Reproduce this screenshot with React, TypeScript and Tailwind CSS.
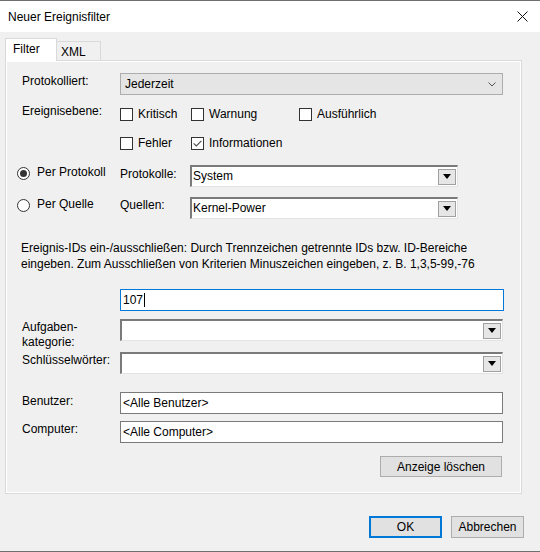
import type { ReactNode } from "react";

function Check({ checked = false, label }: { checked?: boolean; label: string }) {
  return (
    <span className="flex items-center gap-[5px]">
      <span className="w-[13px] h-[13px] border border-[#333333] bg-white flex items-center justify-center">
        {checked && (
          <svg width="9" height="7" viewBox="0 0 9 7">
            <path d="M0.6 3.4 L3.3 6 L8.4 0.8" stroke="#4d4d4d" strokeWidth="1.1" fill="none" />
          </svg>
        )}
      </span>
      <span>{label}</span>
    </span>
  );
}

function Radio({ on = false }: { on?: boolean }) {
  return (
    <span className="w-[13px] h-[13px] rounded-full border border-[#333333] bg-white flex items-center justify-center shrink-0">
      {on && <span className="w-[7px] h-[7px] rounded-full bg-[#333333]" />}
    </span>
  );
}

// old style sunken combo with the small square drop button
function OldCombo({ width, value = "" }: { width: string; value?: string }) {
  return (
    <div
      className={`${width} h-[22px] bg-white border-t-2 border-l-2 border-b border-r border-t-[#7a7a7a] border-l-[#7a7a7a] border-b-[#e3e3e3] border-r-[#e3e3e3] flex items-center justify-between pl-[1px] pr-[1px]`}
    >
      <span className="leading-[15px]">{value}</span>
      <span className="w-[18px] h-[16px] border border-[#a0a0a0] bg-[#e6e6e6] flex items-center justify-center">
        <svg width="8" height="5" viewBox="0 0 8 5">
          <polygon points="0,0 8,0 4,5" fill="#000" />
        </svg>
      </span>
    </div>
  );
}

function Label({ children, className = "" }: { children: ReactNode; className?: string }) {
  return <div className={`ml-[5px] w-[98px] shrink-0 leading-[15px] ${className}`}>{children}</div>;
}

export default function App() {
  return (
    <div className="w-[540px] h-[552px] bg-[#f0f0f0] border-t border-b border-[#6e6e6e] flex flex-col font-['Liberation_Sans',Arial,sans-serif] text-[12px] text-black overflow-hidden">
      {/* title bar */}
      <div className="h-[31px] bg-white flex items-center justify-between pl-[8px] pr-[9px] shrink-0">
        <span className="pt-[1px]">Neuer Ereignisfilter</span>
        <svg width="11" height="11" viewBox="0 0 11 11" className="mr-[3px]">
          <path d="M0.5 0.5 L10.5 10.5 M10.5 0.5 L0.5 10.5" stroke="#111" strokeWidth="1" />
        </svg>
      </div>

      <div className="pl-[5px] pt-[6px]">
        {/* tabs */}
        <div className="flex items-end h-[23px] relative z-10 -mb-px">
          <div className="w-[52px] h-[23px] bg-white border-t border-l border-r border-[#d9d9d9] pl-[7px] pt-[3px] leading-[15px]">
            Filter
          </div>
          <div className="w-[44px] h-[20px] bg-[#f0f0f0] border-t border-r border-b border-[#d9d9d9] pl-[4px] pt-[3px] leading-[15px]">
            XML
          </div>
        </div>

        {/* tab page */}
        <div className="w-[517px] h-[434px] border border-[#d9d9d9] bg-[#f0f0f0] shadow-[inset_0_0_0_1px_#ffffff] pl-[11px] pt-[12px] flex flex-col">
          <div className="flex items-start">
            <Label className="pt-[1px]">Protokolliert:</Label>
            <div className="w-[383px] h-[22px] bg-[#e5e5e5] border border-[#adadad] flex items-center justify-between pl-[4px] pr-[6px]">
              <span>Jederzeit</span>
              <svg width="8" height="5" viewBox="0 0 8 5">
                <path d="M0.5 0.5 L4 4 L7.5 0.5" stroke="#555" strokeWidth="1" fill="none" />
              </svg>
            </div>
          </div>

          <div className="flex items-start mt-[11px]">
            <Label className="-mt-[2px]">Ereignisebene:</Label>
            <div className="flex items-center h-[16px]">
              <div className="w-[71px]">
                <Check label="Kritisch" />
              </div>
              <div className="w-[108px]">
                <Check label="Warnung" />
              </div>
              <Check label="Ausführlich" />
            </div>
          </div>

          <div className="flex items-center h-[16px] mt-[13px] ml-[103px]">
            <div className="w-[71px]">
              <Check label="Fehler" />
            </div>
            <Check checked label="Informationen" />
          </div>

          <div className="flex items-start mt-[14px]">
            <div className="w-[103px] flex items-center gap-[7px] leading-[15px] pt-[1px]">
              <Radio on />
              <span className="-mt-[1px]">Per Protokoll</span>
            </div>
            <div className="w-[70px] leading-[15px] pt-[2px]">Protokolle:</div>
            <OldCombo width="w-[268px]" value="System" />
          </div>

          <div className="flex items-start mt-[10px]">
            <div className="w-[103px] flex items-center gap-[7px] leading-[15px] pt-[1px]">
              <Radio />
              <span className="-mt-[1px]">Per Quelle</span>
            </div>
            <div className="w-[70px] leading-[15px] pt-[1px]">Quellen:</div>
            <OldCombo width="w-[268px]" value="Kernel-Power" />
          </div>

          <p className="ml-[4px] mt-[21px] leading-[16px]">
            Ereignis-IDs ein-/ausschließen: Durch Trennzeichen getrennte IDs bzw. ID-Bereiche
            <br />
            eingeben. Zum Ausschließen von Kriterien Minuszeichen eingeben, z. B. 1,3,5-99,-76
          </p>

          <div className="ml-[103px] mt-[17px] w-[384px] h-[22px] bg-white border border-[#0078d7] flex items-center pl-[2px]">
            <span>107</span>
            <span className="w-px h-[14px] bg-black ml-[1px]" />
          </div>

          <div className="flex items-start h-[22px] mt-[8px]">
            <Label className="pt-[1px]">
              Aufgaben-
              <br />
              kategorie:
            </Label>
            <OldCombo width="w-[383px]" />
          </div>

          <div className="flex items-start mt-[11px]">
            <Label className="pt-[1px]">Schlüsselwörter:</Label>
            <OldCombo width="w-[383px]" />
          </div>

          <div className="flex items-start mt-[18px]">
            <Label className="pt-[2px]">Benutzer:</Label>
            <div className="w-[383px] h-[22px] bg-white border border-[#7a7a7a] flex items-center pl-[2px]">
              &lt;Alle Benutzer&gt;
            </div>
          </div>

          <div className="flex items-start mt-[7px]">
            <Label className="pt-[1px]">Computer:</Label>
            <div className="w-[383px] h-[22px] bg-white border border-[#7a7a7a] flex items-center pl-[2px]">
              &lt;Alle Computer&gt;
            </div>
          </div>

          <div className="flex justify-end pr-[19px] mt-[13px]">
            <button className="w-[122px] h-[21px] bg-[#e1e1e1] border border-[#adadad] flex items-center justify-center">
              Anzeige löschen
            </button>
          </div>
        </div>
      </div>

      {/* dialog buttons */}
      <div className="flex justify-end gap-[9px] pr-[16px] mt-[22px]">
        <button className="w-[73px] h-[22px] bg-[#e1e1e1] border-2 border-[#0078d7] flex items-center justify-center">
          OK
        </button>
        <button className="w-[73px] h-[22px] bg-[#e1e1e1] border border-[#adadad] flex items-center justify-center">
          Abbrechen
        </button>
      </div>
    </div>
  );
}
